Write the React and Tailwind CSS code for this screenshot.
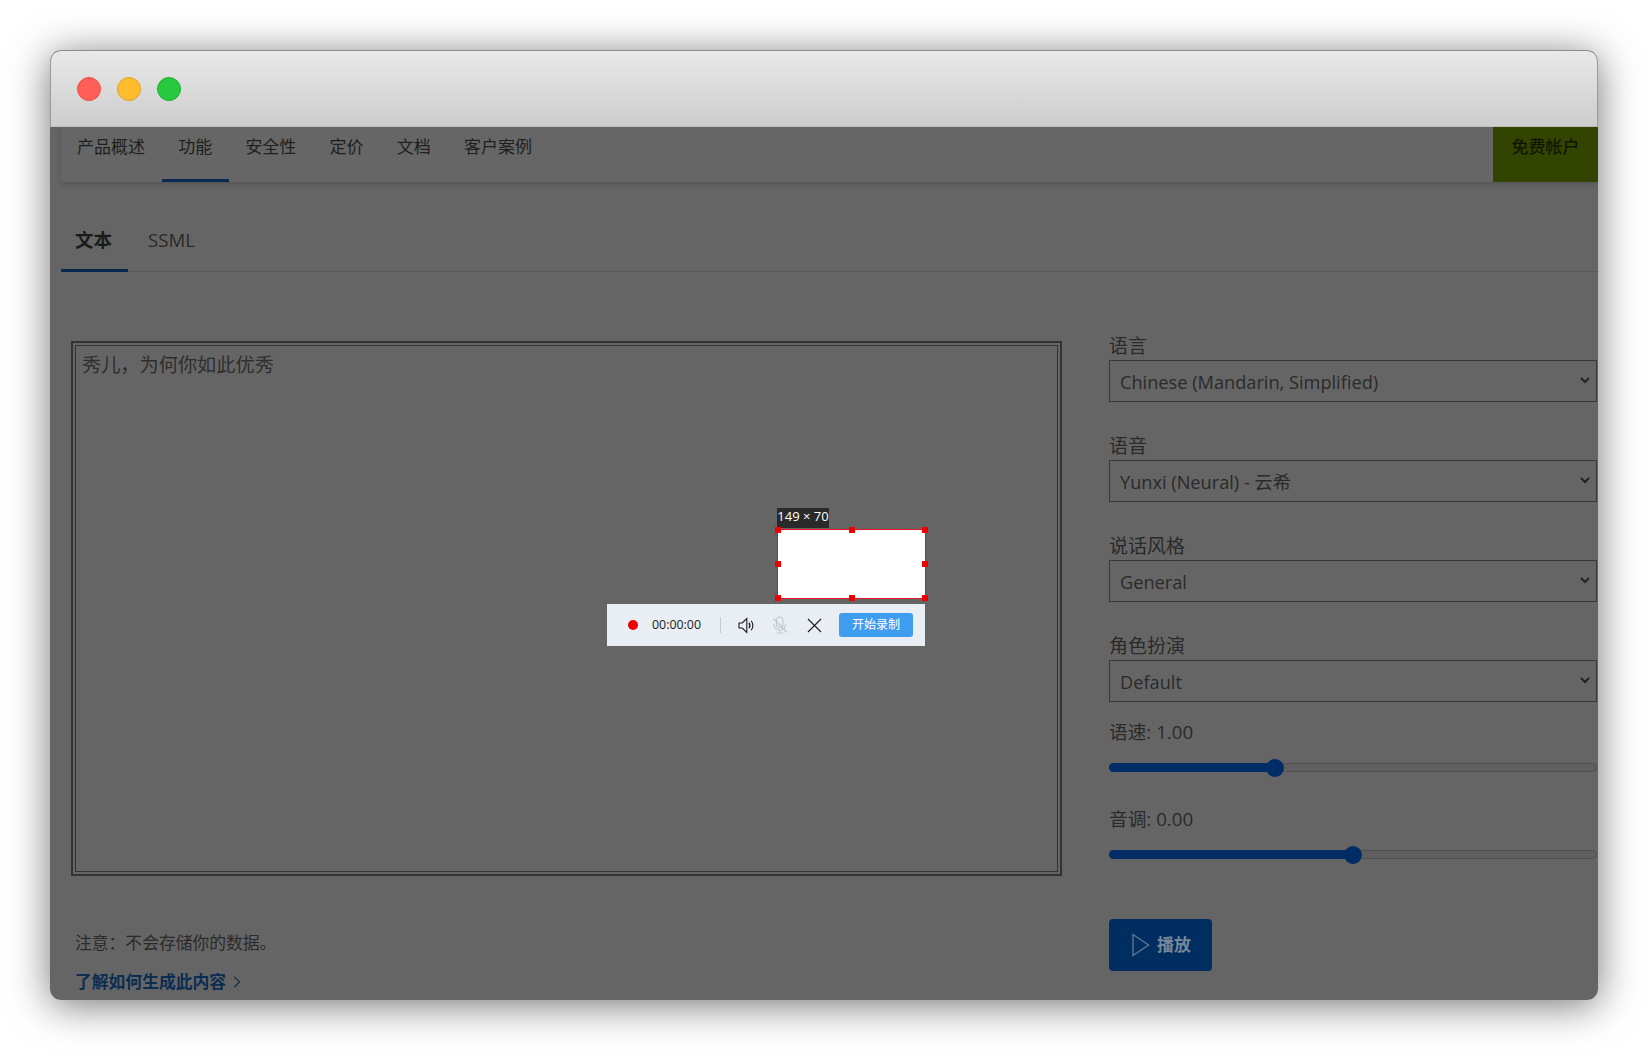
import { ChevronRight } from 'lucide-react'

const FONT = 'font-["Open_Sans","Noto_Sans_CJK_SC",sans-serif]'

const NAV_ITEMS = ['产品概述', '功能', '安全性', '定价', '文档', '客户案例']

const SELECTS = [
  { label: '语言', value: 'Chinese (Mandarin, Simplified)' },
  { label: '语音', value: 'Yunxi (Neural) - 云希' },
  { label: '说话风格', value: 'General' },
  { label: '角色扮演', value: 'Default' },
]

function TitleBar() {
  return (
    <div className="flex h-[77px] shrink-0 items-center gap-4 rounded-t-[11px] border-x border-b border-t border-x-[#9a9a9a] border-b-[#bdbdbd] border-t-[#8c8c8c] bg-gradient-to-b from-[#e9e9e9] to-[#cdcdcd] pl-[26px]">
      <span className="h-6 w-6 rounded-full border border-[#e8504a] bg-[#ff5f57]" />
      <span className="h-6 w-6 rounded-full border border-[#e0a028] bg-[#ffbd2e]" />
      <span className="h-6 w-6 rounded-full border border-[#1fae33] bg-[#28c93f]" />
    </div>
  )
}

function NavBar() {
  return (
    <div className="ml-[11px] flex h-[55px] shrink-0 bg-[#666666] shadow-[0_2px_6px_rgba(0,0,0,0.18)]">
      <div className="flex">
        {NAV_ITEMS.map((item, i) => (
          <div
            key={item}
            className={`h-full ${i === 0 ? 'pl-4 pr-[16.6px]' : 'px-[16.6px]'} pt-[8px] text-[17px] leading-6 text-[#1f1f1f] ${i === 1 ? 'border-b-[3px] border-[#082850]' : ''}`}
          >
            {item}
          </div>
        ))}
      </div>
      <div className="ml-auto flex w-[105px] justify-center bg-[#334400] pt-[8px] text-[17px] font-medium leading-6 text-[#111600]">
        免费帐户
      </div>
    </div>
  )
}

function Tabs() {
  return (
    <div className="ml-[11px] mt-[40px] flex h-[50px] shrink-0 border-b border-[#5a5a5a]">
      <div className="h-[50px] w-[67px] border-b-[3px] border-[#082850] pr-[2px] text-center text-[18.5px] font-bold leading-[36px] text-[#1a1a1a]">
        文本
      </div>
      <div className="pl-5 text-[18.7px] leading-[36px] text-[#2a2a2a]">SSML</div>
    </div>
  )
}

function SelectField({ label, value, last }) {
  return (
    <div className={last ? 'mb-[18px]' : 'mb-[33px]'}>
      <div className="-mt-px mb-px text-[19px] leading-[25px] text-[#2a2a2a]">{label}</div>
      <div className="relative">
        <select
          defaultValue={value}
          className="h-[42px] w-full appearance-none border border-[#383838] bg-transparent pl-[10px] pt-[3px] text-[18.2px] text-[#2a2a2a]"
        >
          <option>{value}</option>
        </select>
        <svg className="absolute right-[7px] top-[16px] h-[9px] w-[10px]" viewBox="0 0 10 9" fill="none" stroke="#222" strokeWidth="2">
          <path d="M1 2l4 4 4-4" />
        </svg>
      </div>
    </div>
  )
}

function Slider({ label, pos }) {
  return (
    <div className="mb-[18px]">
      <div className="text-[18.7px] leading-[23px] text-[#2a2a2a]">{label}</div>
      <div className="relative mt-[20px] h-[9px] rounded-full border border-[#505050] bg-[#5f5f5f]">
        <div className="absolute -bottom-px -left-px -top-px rounded-l-full bg-[#012c66]" style={{ width: pos }} />
        <div className="absolute -top-[5px] h-[18px] w-[18px] rounded-full bg-[#012c66]" style={{ left: pos - 10 }} />
      </div>
      <div className="h-[17px]" />
    </div>
  )
}

function SpeakerIcon() {
  return (
    <svg width="17" height="17" viewBox="0 0 17 17" fill="none" stroke="#1b1b1b" strokeWidth="1.1">
      <path d="M1 6h3.2L8.8 1.6v13.8L4.2 11H1z" />
      <path d="M11 5.8c1 1.6 1 3.8 0 5.4" strokeWidth="1.4" />
      <path d="M13.2 3.8c2 2.8 2 6.6 0 9.4" />
    </svg>
  )
}

function MicOffIcon() {
  return (
    <svg width="18" height="18" viewBox="0 0 18 18" fill="none" stroke="#c3c7ce" strokeWidth="1.1">
      <rect x="5.5" y="1" width="6.5" height="10.5" rx="3.2" />
      <path d="M3 8c0 3.6 2.5 6 5.8 6s5.8-2.4 5.8-6" />
      <path d="M8.8 14v3M5.5 17h6.5" />
      <path d="M2.5 2.5l13.5 14" />
    </svg>
  )
}

function RecorderOverlay() {
  const handles = [
    'left-[-3px] top-[-3px]', 'left-1/2 top-[-3px] -ml-[3px]', 'right-[-3px] top-[-3px]',
    'left-[-3px] top-1/2 -mt-[3px]', 'right-[-3px] top-1/2 -mt-[3px]',
    'left-[-3px] bottom-[-3px]', 'left-1/2 bottom-[-3px] -ml-[3px]', 'right-[-3px] bottom-[-3px]',
  ]
  return (
    <>
      <div className="absolute left-[727px] top-[458px] h-5 w-[52px] bg-[#2a2a2a] text-center text-[13px] leading-[17px] text-white">
        149 × 70
      </div>
      <div className="absolute left-[727px] top-[479px] h-[70px] w-[149px] border border-[#e8141c] bg-white">
        {handles.map((h) => (
          <span key={h} className={`absolute h-[6px] w-[6px] bg-[#f00000] ${h}`} />
        ))}
      </div>
      <div className="absolute left-[557px] top-[554px] flex h-[42px] w-[318px] items-center bg-[#e9eef5] text-[#1b1b1b]">
        <span className="ml-[21px] h-[10px] w-[10px] rounded-full bg-[#f00000]" />
        <span className="ml-[14px] text-[12.4px] leading-none">00:00:00</span>
        <span className="ml-[19px] h-4 w-px bg-[#c6cad1]" />
        <span className="ml-[17px] flex"><SpeakerIcon /></span>
        <span className="ml-4 flex"><MicOffIcon /></span>
        <svg className="ml-[18px]" width="15" height="15" viewBox="0 0 15 15" stroke="#1b1b1b" strokeWidth="1.1">
          <path d="M1 1l13 13M14 1L1 14" />
        </svg>
        <span className="ml-[17px] h-6 w-[74px] rounded-[3px] bg-[#3f9df0] text-center text-[12px] leading-6 text-white">
          开始录制
        </span>
      </div>
    </>
  )
}

export default function App() {
  return (
    <div className={`h-[1051px] w-[1648px] overflow-hidden bg-white pl-[50px] pt-[50px] ${FONT}`}>
      <div className="relative flex h-[950px] w-[1548px] flex-col rounded-[11px] shadow-[0_5px_40px_rgba(0,0,0,0.55)]">
        <TitleBar />
        <div className="flex flex-1 flex-col overflow-hidden rounded-b-[11px] bg-[#656565]">
          <NavBar />
          <Tabs />
          <div className="flex flex-1 pl-[21px] pr-px pt-[69px]">
            <div className="w-[991px]">
              <div className="h-[535px] border-2 border-[#333333] p-[2px]">
                <textarea
                  readOnly
                  defaultValue="秀儿，为何你如此优秀"
                  className="block h-full w-full resize-none border border-[#333333] bg-transparent pl-[6px] pt-[5px] text-[19.2px] text-[#2e2e2e] outline-none"
                />
              </div>
              <div className="ml-[4px] mt-[55px] text-[16.8px] leading-6 text-[#2a2a2a]">注意：不会存储你的数据。</div>
              <div className="ml-[4px] mt-[15px] flex items-center text-[16.8px] font-bold leading-6 text-[#0b2d52]">
                了解如何生成此内容
                <ChevronRight className="ml-[1px] h-[22px] w-[20px] text-[#1d2c3c]" strokeWidth={1.3} />
              </div>
            </div>
            <div className="-mt-[6px] ml-[47px] flex-1">
              {SELECTS.map((s, i) => (
                <SelectField key={s.label} {...s} last={i === SELECTS.length - 1} />
              ))}
              <Slider label="语速: 1.00" pos={166} />
              <Slider label="音调: 0.00" pos={244} />
              <button className="mt-[43px] flex h-[52px] w-[103px] items-center rounded-[4px] bg-[#002e61] pl-[23px] text-[17px] font-bold text-[#77889a]">
                <svg width="18" height="24" viewBox="0 0 18 24" fill="none" stroke="#5c7590" strokeWidth="1.4">
                  <path d="M1 1.5v21L16.5 12z" />
                </svg>
                <span className="ml-[7px]">播放</span>
              </button>
            </div>
          </div>
        </div>
        <RecorderOverlay />
      </div>
    </div>
  )
}
